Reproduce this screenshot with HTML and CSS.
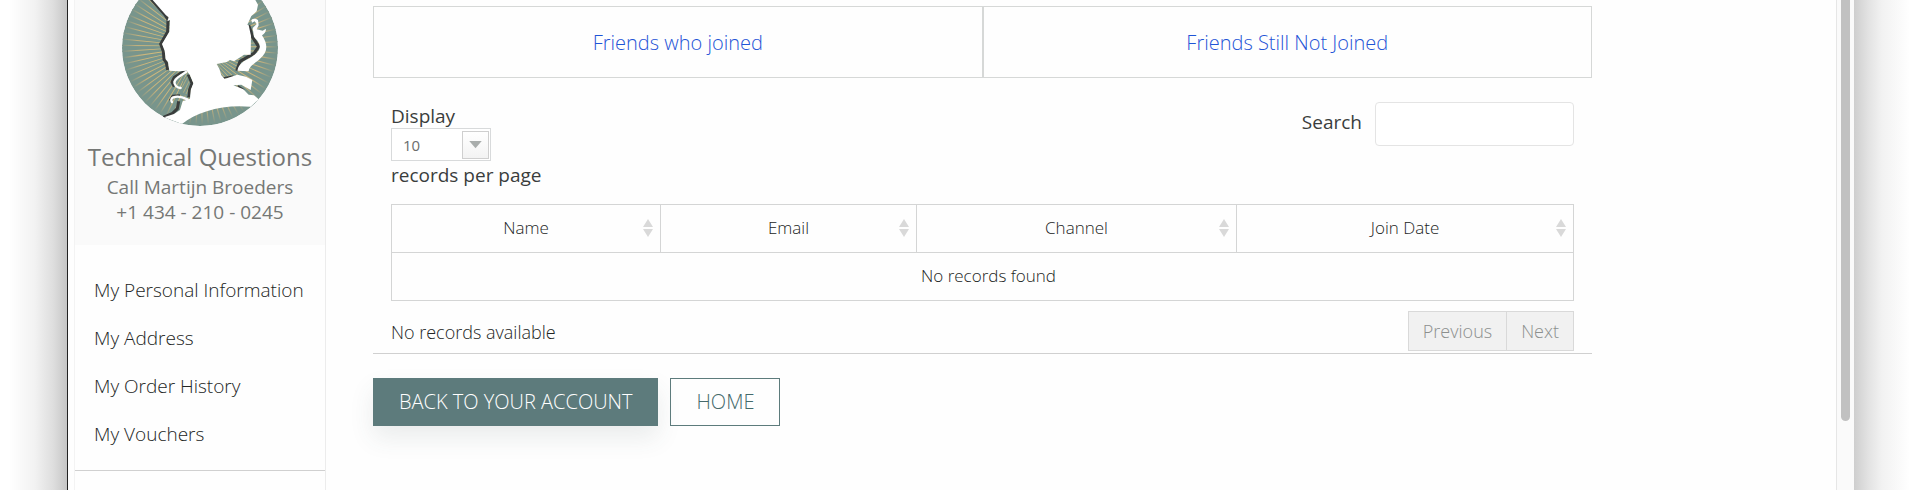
FILE: index.html
```html
<!DOCTYPE html>
<html lang="en">
<head>
<meta charset="utf-8">
<title>Referred friends</title>
<link rel="stylesheet" href="styles.css">
</head>
<body>
<div class="window">
  <aside class="sidebar">
    <section class="support">
      <svg class="logo" viewBox="66 0 468 378" role="img" aria-label="Portrait emblem">
        <defs>
          <radialGradient id="ray" gradientUnits="userSpaceOnUse" cx="300" cy="139" r="234">
            <stop offset="0.5" stop-color="#d8be7a"/>
            <stop offset="0.8" stop-color="#c6b27c"/>
            <stop offset="1" stop-color="#7a948b"/>
          </radialGradient>
          <clipPath id="disc"><circle cx="300" cy="144" r="234"/></clipPath>
        </defs>
        <g clip-path="url(#disc)">
          <circle cx="300" cy="144" r="234" fill="#78958c"/>
          <circle cx="300" cy="139" r="120" fill="none" stroke="url(#ray)" stroke-width="228" stroke-dasharray="2 7.666"/>
          <g fill="none" stroke="#3a3d3c" stroke-width="9" stroke-linejoin="round">
            <path d="M154 -2L196 46L204 58L203 95L182 132L190 154L192 178L199 188L203 210"/>
            <path d="M260 210L240 220L222 232L215 246L222 260" stroke-width="7"/>
            <path d="M264 226L275 250L268 268L266 290"/>
            <path d="M240 286L218 288L210 302" stroke-width="7"/>
            <path d="M236 304L232 326L218 340L190 352"/>
            <path d="M446 76L452 92L458 112L476 140L462 160L420 184L410 212"/>
            <path d="M370 234L400 228M414 258L432 270" stroke-width="5"/>
          </g>
          <path fill="#fff" d="M158 0L198 46L206 52L202 64L210 60L208 95L186 132L194 152L197 178L204 186L208 212L236 214L260 212L270 226L280 250L272 270L270 296L248 304L240 330L222 342L192 352L246 372C290 335 370 312 452 320L476 298L462 286L446 284L430 268L400 256L424 254L452 270L457 240L438 230L412 224L374 237L364 226L358 206L350 192L380 186L390 180L402 184L432 164L452 164L453 108L446 76L442 74L454 48L470 34L474 14L466 0Z"/>
          <path fill="#78958c" d="M264 224L274 250L266 270L264 288L240 284L244 268L250 240Z"/>
          <path fill="none" stroke="#cdb87c" stroke-width="2" d="M262 232L246 262M268 242L250 278M268 260L258 282"/>
          <path fill="none" stroke="#3a3d3c" stroke-width="7" d="M264 224L275 250L268 268L266 292"/>
          <path fill="#fff" d="M454 60Q462 52 474 60L476 76L470 88L488 92L498 86Q498 98 486 106C506 136 502 158 480 176C462 192 448 198 446 214L412 212C418 182 442 182 464 164C492 142 476 126 462 110L458 84L470 72L464 64L456 68Z"/>
          <g fill="none" stroke="#fff" stroke-width="7" stroke-linecap="round">
            <path d="M258 216L234 232Q216 246 228 258Q234 264 242 264"/>
            <path d="M262 298Q238 286 220 292Q210 298 216 306"/>
          </g>
        </g>
      </svg>
      <h2 class="support-title">Technical Questions</h2>
      <p class="support-line">Call Martijn Broeders</p>
      <p class="support-line">+1 434 - 210 - 0245</p>
    </section>
    <nav class="menu">
      <a href="#">My Personal Information</a>
      <a href="#">My Address</a>
      <a href="#">My Order History</a>
      <a href="#">My Vouchers</a>
    </nav>
  </aside>
  <main class="main">
    <div class="content">
      <nav class="tabs">
        <a href="#">Friends who joined</a>
        <a href="#">Friends Still Not Joined</a>
      </nav>
      <section class="records">
        <div class="toolbar">
          <div class="length">
            <label for="length">Display</label>
            <span class="select">
              <select id="length"><option>10</option><option>25</option><option>50</option></select>
              <svg class="select-arrow" viewBox="0 0 28 29" aria-hidden="true"><path d="M7 10H21L14 18Z"/></svg>
            </span>
            <span>records per page</span>
          </div>
          <div class="search">
            <label for="search">Search</label>
            <input id="search" type="text">
          </div>
        </div>
        <table class="table">
          <colgroup><col class="col-name"><col class="col-email"><col class="col-channel"><col class="col-date"></colgroup>
          <thead>
            <tr>
              <th><div class="head"><span>Name</span><svg class="sort" viewBox="0 0 10 18" aria-hidden="true"><path d="M5 0L10 8H0ZM0 10H10L5 18Z"/></svg></div></th>
              <th><div class="head"><span>Email</span><svg class="sort" viewBox="0 0 10 18" aria-hidden="true"><path d="M5 0L10 8H0ZM0 10H10L5 18Z"/></svg></div></th>
              <th><div class="head"><span>Channel</span><svg class="sort" viewBox="0 0 10 18" aria-hidden="true"><path d="M5 0L10 8H0ZM0 10H10L5 18Z"/></svg></div></th>
              <th><div class="head"><span>Join Date</span><svg class="sort" viewBox="0 0 10 18" aria-hidden="true"><path d="M5 0L10 8H0ZM0 10H10L5 18Z"/></svg></div></th>
            </tr>
          </thead>
          <tbody><tr><td colspan="4">No records found</td></tr></tbody>
        </table>
        <div class="footer">
          <p class="info">No records available</p>
          <div class="pager">
            <button type="button" disabled>Previous</button>
            <button type="button" disabled>Next</button>
          </div>
        </div>
      </section>
      <div class="actions">
        <a class="button button-solid" href="#">BACK TO YOUR ACCOUNT</a>
        <a class="button" href="#">HOME</a>
      </div>
    </div>
  </main>
  <div class="scrollbar"><div class="thumb"></div></div>
</div>
</body>
</html>
```
FILE: styles.css
```css
* { box-sizing: border-box; }

body {
  margin: 0;
  padding: 0 66px 0 67px;
  color: #222524;
  font: 300 18px/24px "Open Sans", "Noto Sans", sans-serif;
  background:
    linear-gradient(to left, #c6c6c6 0, #dedede 14px, #f2f2f2 32px, #fff 58px) left / 67px 100% no-repeat,
    linear-gradient(to right, #cecece 0, #e2e2e2 14px, #f2f2f2 28px, #fff 56px) right / 66px 100% no-repeat,
    #fff;
}

a { text-decoration: none; color: inherit; }
p, h2 { margin: 0; }

.window {
  display: flex;
  height: 100vh;
  overflow: hidden;
  background: #fefefe;
  border-left: 1px solid #222;
}

.sidebar {
  flex: none;
  width: 252px;
  margin-left: 6px;
  border-left: 1px solid #f3f3f3;
  border-right: 1px solid #ececec;
}

.support {
  display: flex;
  flex-direction: column;
  align-items: center;
  height: 245px;
  background: #fafafa;
  color: #757775;
}

.logo { width: 156px; height: 126px; }

.support-title {
  margin: 15px 0 2px;
  font-size: 24px;
  line-height: 32px;
  font-weight: 400;
}

.support-line { font-size: 19px; line-height: 25px; font-weight: 400; }

.menu {
  display: flex;
  flex-direction: column;
  gap: 24px;
  padding: 33px 0 24px 19px;
  border-bottom: 1px solid #d0d0d0;
  font-size: 19px;
  font-weight: 300;
}

.main { flex: 1; padding: 6px 0 0 47px; }
.content { width: 1219px; max-width: 100%; }

.tabs { display: grid; grid-template-columns: 1fr 1fr; }

.tabs a {
  padding: 24px 0 22px;
  border: 1px solid #d6d8d7;
  color: #1f54d6;
  font-size: 20px;
  text-align: center;
}

.records { padding: 24px 18px 2px; border-bottom: 1px solid #d0d0d0; }

.toolbar {
  display: flex;
  justify-content: space-between;
  align-items: flex-start;
  color: #3a3d3c;
  font-size: 19px;
  font-weight: 400;
}

.length { display: flex; flex-direction: column; align-items: flex-start; padding-top: 2px; }

.select {
  display: grid;
  grid-template-columns: 70px 28px;
  align-items: center;
  border: 1px solid #d8dadb;
}

.select select {
  grid-area: 1 / 1 / 2 / 3;
  height: 31px;
  padding: 0 11px;
  border: 0;
  appearance: none;
  background: #fff;
  color: #6b6d6c;
  font: 400 15px "Open Sans", sans-serif;
}

.select-arrow {
  grid-area: 1 / 2;
  height: 28px;
  width: 27px;
  border: 1px solid #cfcfcf;
  background: linear-gradient(#fff, #f3f3f3);
  fill: #a9adac;
  pointer-events: none;
}
.length > span:last-child { margin-top: 2px; }

.search { display: flex; align-items: center; gap: 13px; }
.search label { padding-bottom: 4px; }
.search input {
  width: 199px;
  height: 44px;
  border: 1px solid #e4e4e4;
  border-radius: 4px;
  background: #fff;
  font: inherit;
}

.table {
  width: 100%;
  margin-top: 17px;
  border-collapse: collapse;
  table-layout: fixed;
  font-size: 17px;
}
.table th, .table td { height: 48px; padding: 0 0 2px; border: 1px solid #d4d5d5; font-weight: 300; text-align: center; }
.table td { padding-left: 12px; }
.col-name { width: 269px; }
.col-email { width: 256px; }
.col-channel { width: 320px; }
.head { display: grid; grid-template-columns: 1fr 10px; align-items: center; padding: 0 7px 0 17px; }
.sort { width: 10px; height: 18px; fill: #d9d9d9; }

.footer { display: flex; justify-content: space-between; align-items: center; padding-top: 10px; }
.info { padding-top: 2px; }
.pager { display: flex; border: 1px solid #d9d9d9; }
.pager button {
  height: 38px;
  padding: 0 14px;
  border: 0;
  background: #f1f1f1;
  color: #8c8f8e;
  font: 300 18px "Open Sans", sans-serif;
}
.pager button + button { border-left: 1px solid #d9d9d9; }

.actions { display: flex; gap: 12px; padding-top: 24px; }
.button {
  padding: 11px 25px;
  border: 1px solid #5d7b7c;
  color: #456a6b;
  font-size: 20px;
}
.button-solid { background: #5d7b7c; color: #fff; box-shadow: 0 12px 24px rgba(60, 80, 80, 0.1); }

.scrollbar { flex: none; width: 18px; padding: 0 4px; border-left: 1px solid #e6e6e6; background: #fafafa; }
.thumb { height: 86vh; border-radius: 0 0 5px 5px; background: #c1c1c1; }
```
